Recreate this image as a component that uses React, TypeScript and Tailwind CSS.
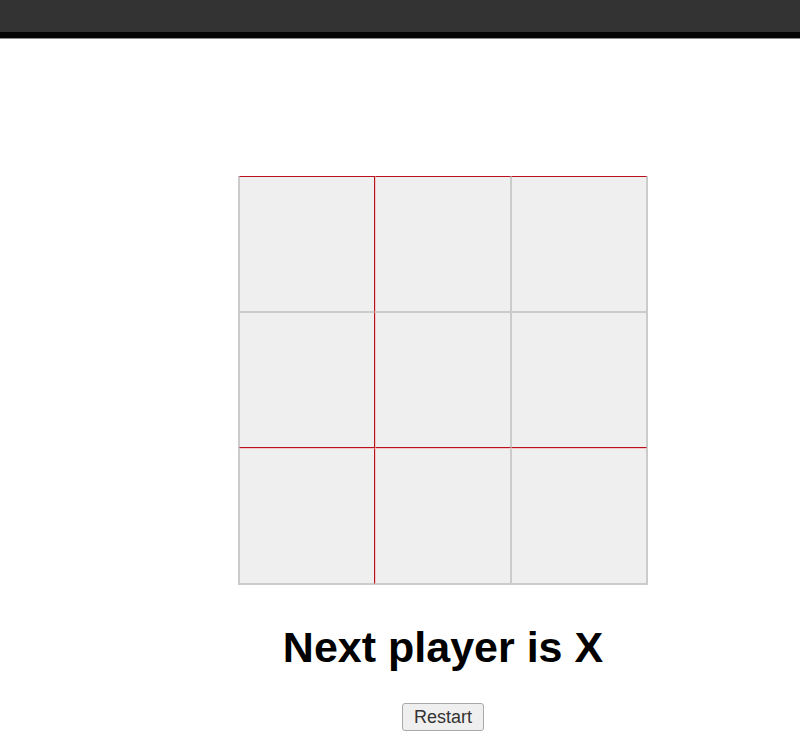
import React from "react";

const RED_T = "border-t-[#b8101c]";
const cellClasses = [
  // row 0
  `border-[#cbcbcb] ${RED_T} border-r-[#b8101c]`,
  `border-[#cbcbcb] ${RED_T} border-l-[#f2c6c6]`,
  `border-[#cbcbcb] ${RED_T}`,
  // row 1
  "border-[#cbcbcb] border-r-[#b8101c] border-b-[#b8101c]",
  "border-[#cbcbcb] border-l-[#f2c6c6] border-b-[#b8101c]",
  "border-[#cbcbcb] border-b-[#b8101c]",
  // row 2
  "border-[#cbcbcb] border-r-[#b8101c] border-t-[#f2c6c6]",
  "border-[#cbcbcb] border-l-[#f2c6c6] border-t-[#f2c6c6]",
  "border-[#cbcbcb] border-t-[#f2c6c6]",
];

export default function App() {
  return (
    <div className="min-h-[750px] bg-white" style={{ fontFamily: '"Liberation Sans", Arial, sans-serif' }}>
      <div className="h-[32px] bg-[#333333]" />
      <div className="h-[6px] bg-[#050505]" />
      <div className="h-px bg-[#8c8c8c]" />
      <div className="ml-[238px] mt-[137px] flex w-[410px] flex-col items-center">
        <div className="grid w-[410px] grid-cols-3 border border-t-0 border-[#cbcbcb]">
          {cellClasses.map((c, i) => (
            <button key={i} className={`h-[136px] w-[136px] border bg-[#efefef] ${c}`} />
          ))}
        </div>
        <h1 className="mt-[38px] text-[43px] font-bold leading-[48px] text-black">Next player is X</h1>
        <button className="mt-[32px] h-[28px] rounded-[3px] border border-[#a9a9a9] bg-[#efefef] px-[11px] text-[18px] leading-none text-[#333]">
          Restart
        </button>
      </div>
    </div>
  );
}
